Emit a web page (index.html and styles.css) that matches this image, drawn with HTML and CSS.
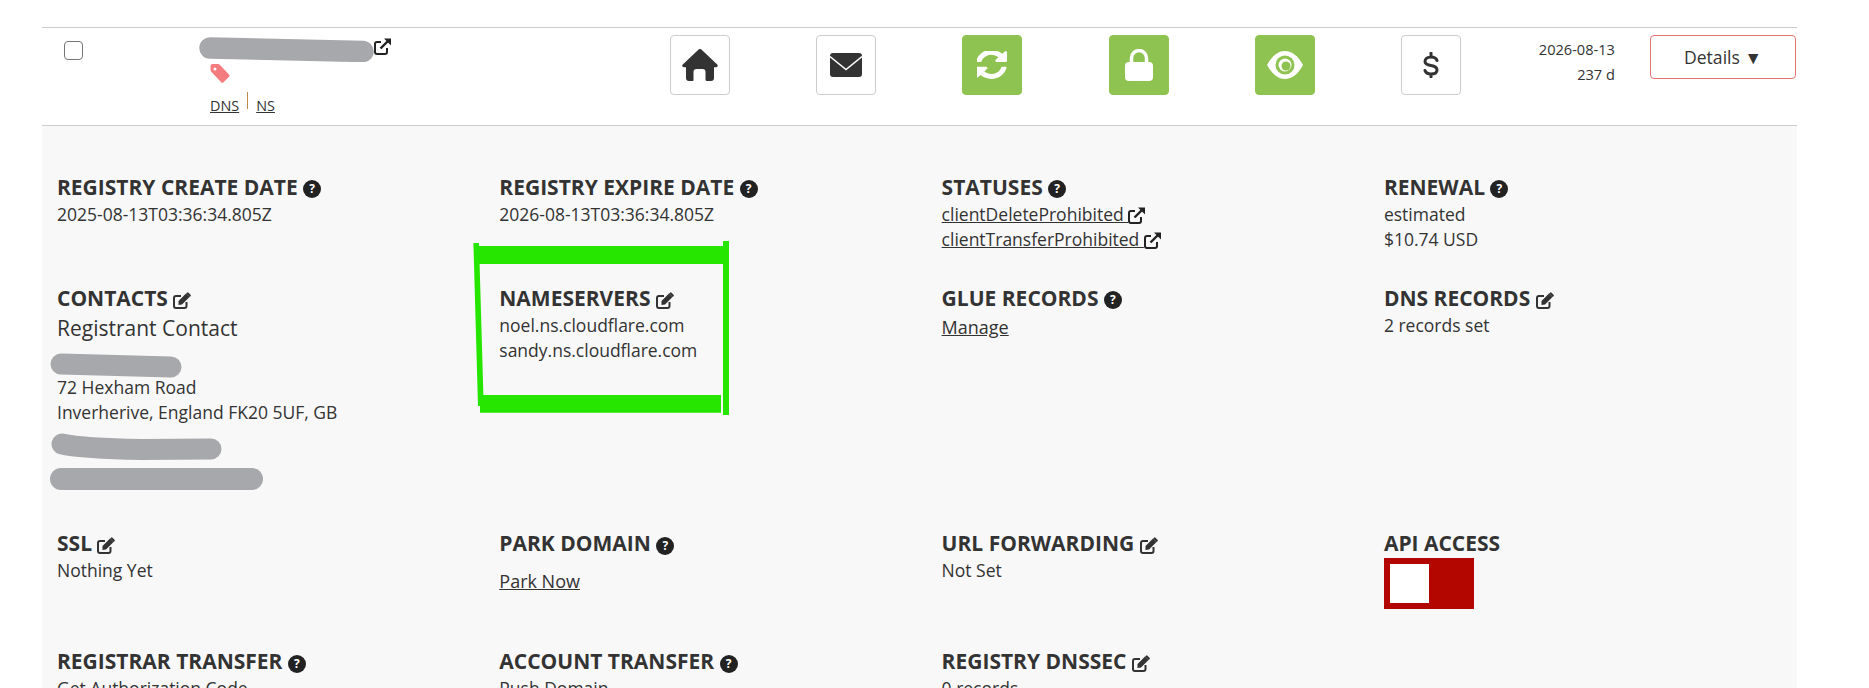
FILE: index.html
```html
<!DOCTYPE html>
<html lang="en">
<head>
    <meta charset="UTF-8">
    <meta name="viewport" content="width=device-width, initial-scale=1.0">
    <title>Domain Details</title>
    <link rel="stylesheet" href="styles.css">
</head>
<body>

<svg class="icon-defs" aria-hidden="true">
    <symbol id="icon-edit" viewBox="0 0 18 17">
        <path d="M13.5 10v4a2 2 0 0 1-2 2H3a2 2 0 0 1-2-2V6a2 2 0 0 1 2-2h5" fill="none" stroke="currentColor" stroke-width="2"/>
        <path d="M5.500 9 13 1.500 16.500 5 9 12.500 5.500 13zM14 .7q.8-.7 1.500 0l2 2q.7.700 0 1.500l-.8.800-3.500-3.500z" fill="currentColor"/>
    </symbol>
    <symbol id="icon-ext" viewBox="0 0 17 17">
        <path d="M7 4H3a2 2 0 0 0-2 2v8a2 2 0 0 0 2 2h8a2 2 0 0 0 2-2v-4" fill="none" stroke="currentColor" stroke-width="2"/>
        <path d="M6.500 10.500 14 3" fill="none" stroke="currentColor" stroke-width="2.400"/>
        <path d="M10 .5h7v7z" fill="currentColor"/>
    </symbol>
</svg>

<div class="domain-row">
    <div class="check-cell">
        <input type="checkbox" class="row-check">
    </div>

    <div class="name-cell">
        <div class="name-line">
            <svg class="smear" width="175" height="25" viewBox="0 0 175 25"><path d="M11 11 164 14.500" stroke-width="21.500"/></svg>
            <svg class="ext-icon"><use href="#icon-ext"/></svg>
        </div>
        <svg class="tag-icon" width="20" height="19" viewBox="0 0 20 19">
            <path d="M2.500 0H8q1 0 2 1l9 9.500q1 1.200 0 2.300l-5.500 5.400q-1.200 1.100-2.300 0L1.500 8Q.5 7 .5 6V2q0-2 2-2z" fill="#f47c7f"/>
            <circle cx="5" cy="5" r="1.500" fill="#fff"/>
        </svg>
        <div class="name-links">
            <a href="#">DNS</a>
            <span class="divider"></span>
            <a href="#">NS</a>
        </div>
    </div>

    <div class="flag-cell">
        <div class="flag">
            <svg width="36" height="32" viewBox="0 0 36 32"><path d="M16.600.6a2 2 0 0 1 2.800 0l15.800 14.800a1.600 1.600 0 0 1-1.100 2.800H32V29a3 3 0 0 1-3 3h-4a1.500 1.500 0 0 1-1.500-1.500V23a3 3 0 0 0-3-3h-6a3 3 0 0 0-3 3v7.500A1.500 1.500 0 0 1 11 32H7a3 3 0 0 1-3-3V18.200H1.900a1.600 1.600 0 0 1-1.100-2.800z" fill="#333"/></svg>
        </div>
    </div>
    <div class="flag-cell">
        <div class="flag">
            <svg width="32" height="24" viewBox="0 0 32 24"><rect width="32" height="24" rx="3" fill="#333"/><path d="M0 3.500 16 16.500 32 3.500" fill="none" stroke="#fff" stroke-width="1.500"/></svg>
        </div>
    </div>
    <div class="flag-cell">
        <div class="flag flag-on">
            <svg width="30" height="28" viewBox="190 190 1470 1480" preserveAspectRatio="none"><path d="M1639 1056q0 5-1 7-64 268-268 434.500t-478 166.500q-146 0-282.500-55t-243.500-157l-129 129q-19 19-45 19t-45-19-19-45v-448q0-26 19-45t45-19h448q26 0 45 19t19 45-19 45l-137 137q71 66 161 102t187 36q134 0 250-65t186-179q11-17 53-117 8-23 30-23h192q13 0 22.500 9.500t9.500 22.500zm25-800v448q0 26-19 45t-45 19h-448q-26 0-45-19t-19-45 19-45l138-138q-148-137-349-137-134 0-250 65t-186 179q-11 17-53 117-8 23-30 23h-199q-13 0-22.500-9.500t-9.500-22.500v-7q65-268 270-434.500t480-166.500q146 0 284 55.500t245 156.500l130-129q19-19 45-19t45 19 19 45z" fill="#fff"/></svg>
        </div>
    </div>
    <div class="flag-cell">
        <div class="flag flag-on">
            <svg width="28" height="32" viewBox="0 0 28 32"><rect y="13" width="28" height="19" rx="4" fill="#fff"/><path d="M6.500 15V9a7.500 7.500 0 0 1 15 0v6" fill="none" stroke="#fff" stroke-width="3.500"/></svg>
        </div>
    </div>
    <div class="flag-cell">
        <div class="flag flag-on">
            <svg width="36" height="28" viewBox="0 0 36 28">
                <path d="M0 14C5 5 11 0 18 0s13 5 18 14c-5 9-11 14-18 14S5 23 0 14z" fill="#fff"/>
                <circle cx="18" cy="14" r="9.500" fill="#8fc351"/>
                <circle cx="18" cy="14" r="6.500" fill="#fff"/>
                <circle cx="19" cy="15" r="4.500" fill="#8fc351"/>
            </svg>
        </div>
    </div>
    <div class="flag-cell">
        <div class="flag">
            <svg width="16" height="26" viewBox="0 0 16 26"><path d="M14 8.500C13.200 6 11 5 8 5 4.500 5 2 6.800 2 9.500 2 12.500 5 13 8 13.500c3 .5 6 1.500 6 4.500 0 2.500-2.500 4-6 4-3 0-5.200-1-6-3.500M8 1v4M8 22v3" fill="none" stroke="#333" stroke-width="3" stroke-linecap="round"/></svg>
        </div>
    </div>

    <div class="expiry-cell">
        <div>2026-08-13</div>
        <div>237 d</div>
    </div>

    <div class="action-cell">
        <button class="details-button">Details ▼</button>
    </div>
</div>

<div class="detail-panel">
    <div class="detail-box">
        <h3>Registry Create Date <span class="help">?</span></h3>
        <div class="value">2025-08-13T03:36:34.805Z</div>
    </div>
    <div class="detail-box">
        <h3>Registry Expire Date <span class="help">?</span></h3>
        <div class="value">2026-08-13T03:36:34.805Z</div>
    </div>
    <div class="detail-box">
        <h3>Statuses <span class="help">?</span></h3>
        <div class="value"><a href="#">clientDeleteProhibited </a><svg class="ext-icon"><use href="#icon-ext"/></svg></div>
        <div class="value"><a href="#">clientTransferProhibited </a><svg class="ext-icon"><use href="#icon-ext"/></svg></div>
    </div>
    <div class="detail-box">
        <h3>Renewal <span class="help">?</span></h3>
        <div class="value">estimated</div>
        <div class="value">$10.74 USD</div>
    </div>

    <div class="detail-box">
        <h3>Contacts <svg class="edit-icon"><use href="#icon-edit"/></svg></h3>
        <div class="contact-type">Registrant Contact</div>
        <svg class="smear smear-name" width="132" height="25" viewBox="0 0 132 25"><path d="M11 11 121 14" stroke-width="21"/></svg>
        <div class="contact-address">
            <div class="value">72 Hexham Road</div>
            <div class="value">Inverherive, England FK20 5UF, GB</div>
        </div>
        <svg class="smear smear-phone" width="171" height="27" viewBox="0 0 171 27"><path d="M11 11C30 15 60 16 90 16.500L160 16" stroke-width="21"/></svg>
        <svg class="smear smear-mail" width="213" height="22" viewBox="0 0 213 22"><path d="M11 11H202" stroke-width="22"/></svg>
    </div>
    <div class="detail-box">
        <h3>Nameservers <svg class="edit-icon"><use href="#icon-edit"/></svg></h3>
        <div class="value">noel.ns.cloudflare.com</div>
        <div class="value">sandy.ns.cloudflare.com</div>
        <svg class="marker" width="260" height="180" viewBox="0 0 260 180">
            <polygon points="7,7 257,7 257,25 7,25"/>
            <polygon points="1.400,4 7,4 11.700,167 6,167"/>
            <polygon points="251,2 257,2 257,176 251,176"/>
            <polygon points="8,156 249,156 249,173.700 8,173.700"/>
        </svg>
    </div>
    <div class="detail-box">
        <h3>Glue Records <span class="help">?</span></h3>
        <div class="value manage-link"><a href="#">Manage</a></div>
    </div>
    <div class="detail-box">
        <h3>DNS Records <svg class="edit-icon"><use href="#icon-edit"/></svg></h3>
        <div class="value">2 records set</div>
    </div>

    <div class="detail-box">
        <h3>SSL <svg class="edit-icon"><use href="#icon-edit"/></svg></h3>
        <div class="value">Nothing Yet</div>
    </div>
    <div class="detail-box">
        <h3>Park Domain <span class="help">?</span></h3>
        <div class="value park-link"><a href="#">Park Now</a></div>
    </div>
    <div class="detail-box">
        <h3>URL Forwarding <svg class="edit-icon"><use href="#icon-edit"/></svg></h3>
        <div class="value">Not Set</div>
    </div>
    <div class="detail-box">
        <h3>API Access</h3>
        <div class="switch"><span class="knob"></span></div>
    </div>

    <div class="detail-box">
        <h3>Registrar Transfer <span class="help">?</span></h3>
        <div class="value">Get Authorization Code</div>
    </div>
    <div class="detail-box">
        <h3>Account Transfer <span class="help">?</span></h3>
        <div class="value">Push Domain</div>
    </div>
    <div class="detail-box">
        <h3>Registry DNSSEC <svg class="edit-icon"><use href="#icon-edit"/></svg></h3>
        <div class="value">0 records</div>
    </div>
</div>

</body>
</html>
```

FILE: styles.css
```css
html, body {
    height: 688px;
    overflow: hidden;
}

body {
    background-color: #ffffff;
    color: #333333;
    font-family: 'Open Sans', sans-serif;
    font-size: 17.500px;
    margin: 0;
    padding: 27px 72px 0 42px;
}

a {
    color: #333333;
}

.icon-defs {
    display: none;
}

.smear {
    display: block;
    fill: none;
    stroke: #a7a8ab;
    stroke-linecap: round;
}

.ext-icon {
    display: inline-block;
    width: 17px;
    height: 17px;
    color: #222222;
    vertical-align: -3px;
}

.edit-icon {
    display: inline-block;
    width: 18px;
    height: 17px;
    color: #333333;
    vertical-align: -3px;
}

/* top row */

.domain-row {
    display: grid;
    grid-template-columns: 157px 471px repeat(5, 146.2px) 70px 179px 147px;
    height: 97px;
    border-top: 1px solid #cccccc;
    border-bottom: 1px solid #cccccc;
}

.check-cell {
    padding: 13px 0 0 22px;
}

.row-check {
    display: block;
    width: 19px;
    height: 19px;
    margin: 0;
    appearance: none;
    border: 1.500px solid #767676;
    border-radius: 4px;
    background-color: #ffffff;
}

.name-cell {
    padding-top: 9px;
}

.name-line {
    display: flex;
    align-items: flex-start;
    height: 25px;
}

.name-line .ext-icon {
    margin-top: 1px;
}

.tag-icon {
    display: block;
    margin: 2px 0 0 11px;
}

.name-links {
    display: flex;
    align-items: flex-start;
    gap: 8px;
    margin: 9px 0 0 11px;
    font-size: 14.400px;
    line-height: 20px;
}

.name-links a {
    margin-top: 4px;
}

.divider {
    width: 1px;
    height: 17px;
    background-color: #c08a4a;
}

.flag-cell {
    padding-top: 7px;
}

.flag {
    display: flex;
    align-items: center;
    justify-content: center;
    box-sizing: border-box;
    width: 60px;
    height: 60px;
    border: 1px solid #cccccc;
    border-radius: 4px;
    background-color: #ffffff;
}

.flag-on {
    background-color: #8fc351;
    border-color: #8fc351;
}

.expiry-cell {
    padding: 8.500px 35px 0 0;
    font-size: 14.600px;
    line-height: 25px;
    text-align: right;
}

.action-cell {
    padding-top: 7px;
}

.details-button {
    display: block;
    width: 146px;
    height: 44px;
    background-color: #ffffff;
    color: #333333;
    border: 1px solid #e57373;
    border-radius: 4px;
    font-family: 'Open Sans', sans-serif;
    font-size: 17.600px;
    cursor: pointer;
}

/* detail grid */

.detail-panel {
    display: grid;
    grid-template-columns: repeat(3, 442.300px) 1fr;
    grid-template-rows: 111px 245.700px 118px auto;
    padding: 46.500px 0 0 15px;
    background-color: #f8f8f8;
    height: 600px;
}

.detail-box {
    position: relative;
}

.detail-box h3 {
    margin: 0;
    font-size: 21px;
    line-height: 28px;
    font-weight: 700;
    text-transform: uppercase;
}

.help {
    display: inline-block;
    width: 18px;
    height: 18px;
    border-radius: 50%;
    background-color: #222222;
    color: #ffffff;
    font-size: 12px;
    line-height: 18px;
    text-align: center;
    vertical-align: 1.500px;
}

.value {
    line-height: 25px;
}

.detail-box h3 + .value {
    margin-top: 1px;
}

.detail-box h3 + .manage-link {
    margin-top: 3px;
    font-size: 18px;
}

.detail-box h3 + .park-link {
    margin-top: 11.500px;
    font-size: 18px;
}

.contact-type {
    margin-top: 1px;
    font-size: 21px;
    line-height: 30px;
}

.smear-name {
    margin: 10px 0 0 -7px;
}

.contact-address {
    margin-top: -2.500px;
}

.smear-phone {
    margin: 7.500px 0 0 -6px;
}

.smear-mail {
    margin: 8px 0 0 -7px;
}

.switch {
    box-sizing: border-box;
    width: 90px;
    height: 51px;
    margin-top: 1px;
    padding: 6px;
    background-color: #b30600;
}

.knob {
    display: block;
    width: 39px;
    height: 39px;
    background-color: #ffffff;
}

/* hand drawn marker round the nameservers box */
.marker {
    position: absolute;
    left: -27.500px;
    top: -44.500px;
    fill: #26e600;
    pointer-events: none;
}
```
